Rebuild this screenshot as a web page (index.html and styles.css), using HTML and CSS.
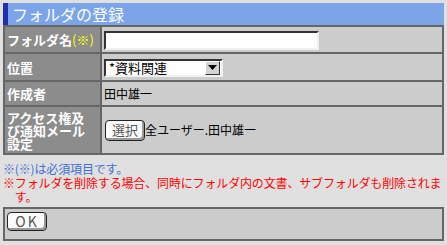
FILE: index.html
```html
<!DOCTYPE html>
<html lang="ja">
<head>
    <meta charset="UTF-8">
    <title>フォルダの登録</title>
    <link rel="stylesheet" href="styles.css">
</head>
<body>

<!-- タイトル -->
<div class="title">フォルダの登録</div>

<!-- 入力フォーム -->
<table class="form-table">
    <tr class="row-name">
        <th>フォルダ名<span class="req">(※)</span></th>
        <td><span class="text-input"></span></td>
    </tr>
    <tr class="row-place">
        <th>位置</th>
        <td>
            <span class="select-box">
                <span class="select-text">*資料関連</span>
                <span class="select-arrow">
                    <svg width="9" height="5" viewBox="0 0 9 5"><polygon points="0,0 9,0 4.5,5" fill="#000"/></svg>
                </span>
            </span>
        </td>
    </tr>
    <tr class="row-owner">
        <th>作成者</th>
        <td>田中雄一</td>
    </tr>
    <tr class="row-access">
        <th>アクセス権及び通知メール設定</th>
        <td><span class="btn btn-select">選択</span>全ユーザー.田中雄一</td>
    </tr>
</table>

<!-- 注意書き -->
<div class="notes">
    <div class="note note-blue"><span class="mark">※</span><span>(※)は必須項目です。</span></div>
    <div class="note note-red"><span class="mark">※</span><span>フォルダを削除する場合、同時にフォルダ内の文書、サブフォルダも削除されます。</span></div>
</div>

<div class="footer">
    <span class="btn btn-ok">OK</span>
</div>

</body>
</html>
```

FILE: styles.css
```css
body {
    margin: 3px;
    background-color: #e0e0e0;
    font-family: "Noto Sans CJK JP", "DejaVu Sans", sans-serif;
    font-size: 12px;
    color: #000;
}

/* タイトルバー */
.title {
    height: 22px;
    line-height: 22px;
    background-color: #7ba5e8;
    border-left: 5px solid #2030b0;
    padding-left: 4px;
    color: #fff;
    font-size: 16px;
}

/* フォーム */
.form-table {
    width: 100%;
    border-collapse: separate;
    border-spacing: 2px;
    background-color: #666;
}
.form-table th {
    width: 89px;
    padding: 0 4px 0 2px;
    background-color: #8c8c8c;
    color: #fff;
    font-size: 13px;
    font-weight: bold;
    text-align: left;
    line-height: 13px;
}
.form-table td {
    background-color: #cccccc;
    padding: 0 0 0 2px;
    line-height: 14px;
}
.row-name { height: 25px; }
.row-place { height: 26px; }
.row-owner { height: 23px; }
.row-access { height: 46px; }

.req {
    color: #ffff00;
    font-weight: normal;
}

.text-input {
    display: block;
    width: 211px;
    height: 15px;
    background-color: #fff;
    border: 2px solid;
    border-color: #333 #f0f0f0 #f0f0f0 #333;
    margin-top: 1px;
}

.select-box {
    display: flex;
    align-items: center;
    width: 115px;
    height: 14px;
    background-color: #fff;
    border: 2px solid;
    border-color: #333 #f0f0f0 #f0f0f0 #333;
    margin-top: 1px;
}
.select-text {
    flex: 1;
    padding-left: 3px;
    font-size: 13px;
}
.select-arrow {
    display: flex;
    align-items: center;
    justify-content: center;
    width: 13px;
    height: 12px;
    margin-right: 1px;
    background-color: #d4d4d4;
    border: 1px solid;
    border-color: #fff #333 #333 #fff;
}

/* ボタン */
.btn {
    display: inline-block;
    box-sizing: border-box;
    background-color: #fbfbfb;
    border: 1px solid #222;
    border-radius: 4px;
    box-shadow: inset -2px -2px 0 #999;
    color: #555;
    text-align: center;
}
.btn-select {
    width: 40px;
    height: 21px;
    line-height: 18px;
    font-size: 13px;
    margin-left: 1px;
}
.btn-ok {
    width: 40px;
    height: 19px;
    line-height: 16px;
    font-size: 14px;
    letter-spacing: 2px;
}

/* 注意書き */
.notes {
    margin-top: 7px;
    line-height: 14px;
    letter-spacing: -0.15px;
}
.note {
    display: flex;
}
.mark {
    flex: none;
}
.note-blue { color: #3f6fd8; }
.note-red { color: #ff0000; }

.footer {
    margin-top: 3px;
    height: 27px;
    padding: 3px 2px 0;
    background-color: #cccccc;
    border: 2px solid #666;
}
```
